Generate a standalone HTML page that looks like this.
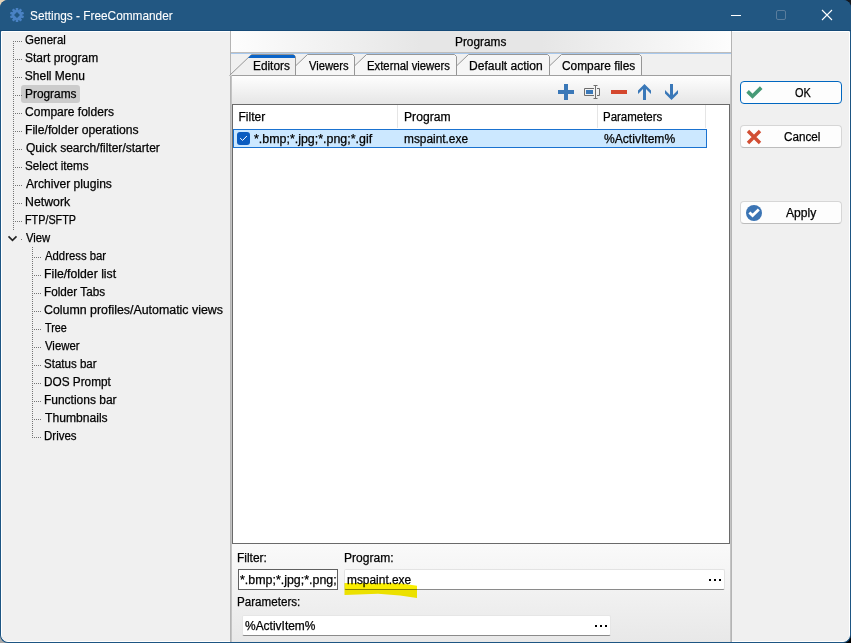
<!DOCTYPE html>
<html><head><meta charset="utf-8">
<style>
*{margin:0;padding:0;box-sizing:border-box}
html,body{width:851px;height:643px;overflow:hidden;background:#161616}
body{position:relative;font-family:"Liberation Sans",sans-serif;font-size:12px;color:#000}
.a{position:absolute}
.t{position:absolute;white-space:nowrap;line-height:14px;height:14px;-webkit-text-stroke:0.25px currentColor}
#win{position:absolute;left:0;top:0;width:851px;height:643px;background:#1d5583;border-radius:8px;overflow:hidden}
</style></head><body>
<div class="a" style="left:0px;top:0px;width:10px;height:10px;background:#e6d4b8"></div>
<div class="a" style="left:841px;top:0px;width:10px;height:10px;background:#14181f"></div>
<div class="a" style="left:0px;top:633px;width:10px;height:10px;background:#a9a9a9"></div>
<div class="a" style="left:841px;top:633px;width:10px;height:10px;background:#000"></div>
<div id="win">
<div class="a" style="left:0px;top:0px;width:851px;height:30px;background:#225782"></div>
<div class="a" style="left:0px;top:30px;width:851px;height:1px;background:#154a77"></div>
<div class="a" style="left:1px;top:31px;width:849px;height:611px;background:#f0f0f0;border-top:1px solid #fff;border-left:1px solid #fff;border-right:1px solid #fff;border-bottom:1px solid #fff;border-radius:0 0 7px 7px"></div>
<svg class="a" style="left:9px;top:7px" width="16" height="16" viewBox="-8 -8 16 16"><g fill="#4a82c4"><rect x="-1.25" y="-7" width="2.5" height="3" transform="rotate(0)"/><rect x="-1.25" y="-7" width="2.5" height="3" transform="rotate(36)"/><rect x="-1.25" y="-7" width="2.5" height="3" transform="rotate(72)"/><rect x="-1.25" y="-7" width="2.5" height="3" transform="rotate(108)"/><rect x="-1.25" y="-7" width="2.5" height="3" transform="rotate(144)"/><rect x="-1.25" y="-7" width="2.5" height="3" transform="rotate(180)"/><rect x="-1.25" y="-7" width="2.5" height="3" transform="rotate(216)"/><rect x="-1.25" y="-7" width="2.5" height="3" transform="rotate(252)"/><rect x="-1.25" y="-7" width="2.5" height="3" transform="rotate(288)"/><rect x="-1.25" y="-7" width="2.5" height="3" transform="rotate(324)"/></g><path fill="#4a82c4" fill-rule="evenodd" d="M-5.3 0A5.3 5.3 0 1 0 5.3 0A5.3 5.3 0 1 0 -5.3 0ZM-3 0L0 -3L3 0L0 3Z"/></svg>
<div class="t" style="left:30.32px;top:10px;transform:scaleX(0.8765);transform-origin:0 0;color:#fff;font-size:13.5px;top:8.8px;-webkit-text-stroke:0.1px #fff">Settings - FreeCommander</div>
<div class="a" style="left:731px;top:15px;width:10px;height:1px;background:#fff"></div>
<div class="a" style="left:776px;top:10px;width:10px;height:10px;border:1px solid #5a7d9d;border-radius:2px"></div>
<svg class="a" style="left:821px;top:9px" width="12" height="12" viewBox="0 0 12 12"><path d="M1 1L11 11M11 1L1 11" stroke="#fff" stroke-width="1.1"/></svg>
<div class="a" style="left:15px;top:41px;width:1px;height:1px;background:#747474"></div>
<div class="a" style="left:17px;top:41px;width:1px;height:1px;background:#747474"></div>
<div class="a" style="left:19px;top:41px;width:1px;height:1px;background:#747474"></div>
<div class="a" style="left:21px;top:41px;width:1px;height:1px;background:#747474"></div>
<div class="t" style="left:24.84px;top:33px;transform:scaleX(0.9561);transform-origin:0 0;">General</div>
<div class="a" style="left:15px;top:59px;width:1px;height:1px;background:#747474"></div>
<div class="a" style="left:17px;top:59px;width:1px;height:1px;background:#747474"></div>
<div class="a" style="left:19px;top:59px;width:1px;height:1px;background:#747474"></div>
<div class="a" style="left:21px;top:59px;width:1px;height:1px;background:#747474"></div>
<div class="t" style="left:24.80px;top:51px;transform:scaleX(0.9986);transform-origin:0 0;">Start program</div>
<div class="a" style="left:15px;top:77px;width:1px;height:1px;background:#747474"></div>
<div class="a" style="left:17px;top:77px;width:1px;height:1px;background:#747474"></div>
<div class="a" style="left:19px;top:77px;width:1px;height:1px;background:#747474"></div>
<div class="a" style="left:21px;top:77px;width:1px;height:1px;background:#747474"></div>
<div class="t" style="left:24.80px;top:69px;">Shell Menu</div>
<div class="a" style="left:21px;top:85px;width:59px;height:18px;background:#cccccc;border-radius:3px"></div>
<div class="a" style="left:15px;top:95px;width:1px;height:1px;background:#747474"></div>
<div class="a" style="left:17px;top:95px;width:1px;height:1px;background:#747474"></div>
<div class="a" style="left:19px;top:95px;width:1px;height:1px;background:#747474"></div>
<div class="a" style="left:21px;top:95px;width:1px;height:1px;background:#747474"></div>
<div class="t" style="left:24.81px;top:87px;transform:scaleX(0.9902);transform-origin:0 0;">Programs</div>
<div class="a" style="left:15px;top:113px;width:1px;height:1px;background:#747474"></div>
<div class="a" style="left:17px;top:113px;width:1px;height:1px;background:#747474"></div>
<div class="a" style="left:19px;top:113px;width:1px;height:1px;background:#747474"></div>
<div class="a" style="left:21px;top:113px;width:1px;height:1px;background:#747474"></div>
<div class="t" style="left:24.80px;top:105px;transform:scaleX(1.0023);transform-origin:0 0;">Compare folders</div>
<div class="a" style="left:15px;top:131px;width:1px;height:1px;background:#747474"></div>
<div class="a" style="left:17px;top:131px;width:1px;height:1px;background:#747474"></div>
<div class="a" style="left:19px;top:131px;width:1px;height:1px;background:#747474"></div>
<div class="a" style="left:21px;top:131px;width:1px;height:1px;background:#747474"></div>
<div class="t" style="left:24.79px;top:123px;transform:scaleX(1.0126);transform-origin:0 0;">File/folder operations</div>
<div class="a" style="left:15px;top:149px;width:1px;height:1px;background:#747474"></div>
<div class="a" style="left:17px;top:149px;width:1px;height:1px;background:#747474"></div>
<div class="a" style="left:19px;top:149px;width:1px;height:1px;background:#747474"></div>
<div class="a" style="left:21px;top:149px;width:1px;height:1px;background:#747474"></div>
<div class="t" style="left:25.80px;top:141px;transform:scaleX(1.0037);transform-origin:0 0;">Quick search/filter/starter</div>
<div class="a" style="left:15px;top:167px;width:1px;height:1px;background:#747474"></div>
<div class="a" style="left:17px;top:167px;width:1px;height:1px;background:#747474"></div>
<div class="a" style="left:19px;top:167px;width:1px;height:1px;background:#747474"></div>
<div class="a" style="left:21px;top:167px;width:1px;height:1px;background:#747474"></div>
<div class="t" style="left:24.83px;top:159px;transform:scaleX(0.9734);transform-origin:0 0;">Select items</div>
<div class="a" style="left:15px;top:185px;width:1px;height:1px;background:#747474"></div>
<div class="a" style="left:17px;top:185px;width:1px;height:1px;background:#747474"></div>
<div class="a" style="left:19px;top:185px;width:1px;height:1px;background:#747474"></div>
<div class="a" style="left:21px;top:185px;width:1px;height:1px;background:#747474"></div>
<div class="t" style="left:25.80px;top:177px;transform:scaleX(1.0059);transform-origin:0 0;">Archiver plugins</div>
<div class="a" style="left:15px;top:203px;width:1px;height:1px;background:#747474"></div>
<div class="a" style="left:17px;top:203px;width:1px;height:1px;background:#747474"></div>
<div class="a" style="left:19px;top:203px;width:1px;height:1px;background:#747474"></div>
<div class="a" style="left:21px;top:203px;width:1px;height:1px;background:#747474"></div>
<div class="t" style="left:24.77px;top:195px;transform:scaleX(1.0256);transform-origin:0 0;">Network</div>
<div class="a" style="left:15px;top:221px;width:1px;height:1px;background:#747474"></div>
<div class="a" style="left:17px;top:221px;width:1px;height:1px;background:#747474"></div>
<div class="a" style="left:19px;top:221px;width:1px;height:1px;background:#747474"></div>
<div class="a" style="left:21px;top:221px;width:1px;height:1px;background:#747474"></div>
<div class="t" style="left:24.90px;top:213px;transform:scaleX(0.9000);transform-origin:0 0;">FTP/SFTP</div>
<div class="a" style="left:21px;top:239px;width:1px;height:1px;background:#747474"></div>
<div class="t" style="left:25.80px;top:231px;transform:scaleX(0.9385);transform-origin:0 0;">View</div>
<div class="a" style="left:13px;top:41px;width:1px;height:189px;background:repeating-linear-gradient(180deg,#747474 0 1px,transparent 1px 2px)"></div>
<svg class="a" style="left:7px;top:234px" width="12" height="8" viewBox="0 0 12 8"><path d="M1.5 2.4L5.5 6.3L9.5 2.4" fill="none" stroke="#222" stroke-width="1.6"/></svg>
<div class="a" style="left:34px;top:257px;width:1px;height:1px;background:#747474"></div>
<div class="a" style="left:36px;top:257px;width:1px;height:1px;background:#747474"></div>
<div class="a" style="left:38px;top:257px;width:1px;height:1px;background:#747474"></div>
<div class="a" style="left:40px;top:257px;width:1px;height:1px;background:#747474"></div>
<div class="t" style="left:44.90px;top:249px;transform:scaleX(0.9446);transform-origin:0 0;">Address bar</div>
<div class="a" style="left:34px;top:275px;width:1px;height:1px;background:#747474"></div>
<div class="a" style="left:36px;top:275px;width:1px;height:1px;background:#747474"></div>
<div class="a" style="left:38px;top:275px;width:1px;height:1px;background:#747474"></div>
<div class="a" style="left:40px;top:275px;width:1px;height:1px;background:#747474"></div>
<div class="t" style="left:43.88px;top:267px;transform:scaleX(1.0200);transform-origin:0 0;">File/folder list</div>
<div class="a" style="left:34px;top:293px;width:1px;height:1px;background:#747474"></div>
<div class="a" style="left:36px;top:293px;width:1px;height:1px;background:#747474"></div>
<div class="a" style="left:38px;top:293px;width:1px;height:1px;background:#747474"></div>
<div class="a" style="left:40px;top:293px;width:1px;height:1px;background:#747474"></div>
<div class="t" style="left:43.92px;top:285px;transform:scaleX(0.9770);transform-origin:0 0;">Folder Tabs</div>
<div class="a" style="left:34px;top:311px;width:1px;height:1px;background:#747474"></div>
<div class="a" style="left:36px;top:311px;width:1px;height:1px;background:#747474"></div>
<div class="a" style="left:38px;top:311px;width:1px;height:1px;background:#747474"></div>
<div class="a" style="left:40px;top:311px;width:1px;height:1px;background:#747474"></div>
<div class="t" style="left:43.87px;top:303px;transform:scaleX(1.0320);transform-origin:0 0;">Column profiles/Automatic views</div>
<div class="a" style="left:34px;top:329px;width:1px;height:1px;background:#747474"></div>
<div class="a" style="left:36px;top:329px;width:1px;height:1px;background:#747474"></div>
<div class="a" style="left:38px;top:329px;width:1px;height:1px;background:#747474"></div>
<div class="a" style="left:40px;top:329px;width:1px;height:1px;background:#747474"></div>
<div class="t" style="left:44.90px;top:321px;transform:scaleX(0.9000);transform-origin:0 0;">Tree</div>
<div class="a" style="left:34px;top:347px;width:1px;height:1px;background:#747474"></div>
<div class="a" style="left:36px;top:347px;width:1px;height:1px;background:#747474"></div>
<div class="a" style="left:38px;top:347px;width:1px;height:1px;background:#747474"></div>
<div class="a" style="left:40px;top:347px;width:1px;height:1px;background:#747474"></div>
<div class="t" style="left:44.90px;top:339px;transform:scaleX(0.9459);transform-origin:0 0;">Viewer</div>
<div class="a" style="left:34px;top:365px;width:1px;height:1px;background:#747474"></div>
<div class="a" style="left:36px;top:365px;width:1px;height:1px;background:#747474"></div>
<div class="a" style="left:38px;top:365px;width:1px;height:1px;background:#747474"></div>
<div class="a" style="left:40px;top:365px;width:1px;height:1px;background:#747474"></div>
<div class="t" style="left:43.94px;top:357px;transform:scaleX(0.9611);transform-origin:0 0;">Status bar</div>
<div class="a" style="left:34px;top:383px;width:1px;height:1px;background:#747474"></div>
<div class="a" style="left:36px;top:383px;width:1px;height:1px;background:#747474"></div>
<div class="a" style="left:38px;top:383px;width:1px;height:1px;background:#747474"></div>
<div class="a" style="left:40px;top:383px;width:1px;height:1px;background:#747474"></div>
<div class="t" style="left:43.92px;top:375px;transform:scaleX(0.9821);transform-origin:0 0;">DOS Prompt</div>
<div class="a" style="left:34px;top:401px;width:1px;height:1px;background:#747474"></div>
<div class="a" style="left:36px;top:401px;width:1px;height:1px;background:#747474"></div>
<div class="a" style="left:38px;top:401px;width:1px;height:1px;background:#747474"></div>
<div class="a" style="left:40px;top:401px;width:1px;height:1px;background:#747474"></div>
<div class="t" style="left:43.90px;top:393px;">Functions bar</div>
<div class="a" style="left:34px;top:419px;width:1px;height:1px;background:#747474"></div>
<div class="a" style="left:36px;top:419px;width:1px;height:1px;background:#747474"></div>
<div class="a" style="left:38px;top:419px;width:1px;height:1px;background:#747474"></div>
<div class="a" style="left:40px;top:419px;width:1px;height:1px;background:#747474"></div>
<div class="t" style="left:44.90px;top:411px;transform:scaleX(1.0097);transform-origin:0 0;">Thumbnails</div>
<div class="a" style="left:34px;top:437px;width:1px;height:1px;background:#747474"></div>
<div class="a" style="left:36px;top:437px;width:1px;height:1px;background:#747474"></div>
<div class="a" style="left:38px;top:437px;width:1px;height:1px;background:#747474"></div>
<div class="a" style="left:40px;top:437px;width:1px;height:1px;background:#747474"></div>
<div class="t" style="left:43.94px;top:429px;transform:scaleX(0.9576);transform-origin:0 0;">Drives</div>
<div class="a" style="left:32px;top:247px;width:1px;height:191px;background:repeating-linear-gradient(180deg,#747474 0 1px,transparent 1px 2px)"></div>
<div class="a" style="left:230px;top:31px;width:1px;height:611px;background:#b4b4b4"></div>
<div class="a" style="left:731px;top:31px;width:1px;height:611px;background:#b4b4b4"></div>
<div class="a" style="left:231px;top:31px;width:500px;height:21px;background:linear-gradient(90deg,#fdfdfd 0%,#e6e6e6 38%,#e6e6e6 62%,#fdfdfd 100%)"></div>
<div class="a" style="left:231px;top:52px;width:500px;height:1px;background:#bfbdbb"></div>
<div class="a" style="left:231px;top:53px;width:500px;height:1px;background:#a8c8ec"></div>
<div class="t" style="left:454.51px;top:35px;transform:scaleX(0.9863);transform-origin:0 0;">Programs</div>
<div class="a" style="left:231px;top:54px;width:500px;height:21px;background:#f0f0f0"></div>
<svg class="a" style="left:0;top:0" width="851" height="80"><path d="M539.5 75.5 L561.5 54.5 L639.5 54.5 L641.5 56.5 L641.5 75.5" fill="#f6f6f6" stroke="#969696" stroke-width="1"/><path d="M446.5 75.5 L468.5 54.5 L547.5 54.5 L549.5 56.5 L549.5 75.5" fill="#f6f6f6" stroke="#969696" stroke-width="1"/><path d="M344.5 75.5 L366.5 54.5 L454.5 54.5 L456.5 56.5 L456.5 75.5" fill="#f6f6f6" stroke="#969696" stroke-width="1"/><path d="M285.5 75.5 L307.5 54.5 L352.5 54.5 L354.5 56.5 L354.5 75.5" fill="#f6f6f6" stroke="#969696" stroke-width="1"/><path d="M229.5 75.5 L251.5 54.5 L293.5 54.5 L295.5 56.5 L295.5 75.5" fill="#f0f0f0" stroke="#969696" stroke-width="1"/><path d="M251 55 L294 55 L295 56 L295 58 L248 58 Z" fill="#0a64c8"/></svg>
<div class="t" style="left:252.51px;top:59px;transform:scaleX(0.9861);transform-origin:0 0;">Editors</div>
<div class="t" style="left:308.50px;top:59px;transform:scaleX(0.9333);transform-origin:0 0;">Viewers</div>
<div class="t" style="left:366.66px;top:59px;transform:scaleX(0.9425);transform-origin:0 0;">External viewers</div>
<div class="t" style="left:469.00px;top:59px;transform:scaleX(1.0042);transform-origin:0 0;">Default action</div>
<div class="t" style="left:561.61px;top:59px;transform:scaleX(0.9904);transform-origin:0 0;">Compare files</div>
<div class="a" style="left:231px;top:75px;width:500px;height:1px;background:#a0a0a0"></div>
<div class="a" style="left:232px;top:76px;width:498px;height:28px;background:linear-gradient(180deg,#fefefe,#e6e6e6)"></div>
<div class="a" style="left:730px;top:75px;width:1px;height:567px;background:#c4c4c4"></div>
<div class="a" style="left:231px;top:75px;width:1px;height:567px;background:#c4c4c4"></div>
<div class="a" style="left:558px;top:90px;width:16px;height:4px;background:#3a78b8"></div>
<div class="a" style="left:564px;top:84px;width:4px;height:16px;background:#3a78b8"></div>
<svg class="a" style="left:583px;top:84px" width="18" height="16" viewBox="0 0 18 16">
<path d="M1.5 4.5H11M1.5 4.5V11.5H11" fill="none" stroke="#6e6e6e" stroke-width="1"/>
<rect x="3" y="6" width="7" height="4" fill="#3a78b8"/>
<path d="M12.5 1.5V14.5M10.5 1.5H14.5M10.5 14.5H14.5M14 4.5H16.5V11.5H14" fill="none" stroke="#6e6e6e" stroke-width="1"/>
</svg>
<div class="a" style="left:611px;top:90px;width:16px;height:4px;background:#d4472e"></div>
<svg class="a" style="left:0;top:0" width="700" height="110">
<path d="M644.5 84 L651 90.5 L651 94 L646 89 L646 100 L643 100 L643 89 L638 94 L638 90.5 Z" fill="#3a78b8"/>
<path d="M670 84 L673 84 L673 95 L678 90 L678 93.5 L671.5 100 L665 93.5 L665 90 L670 95 Z" fill="#3a78b8"/>
</svg>
<div class="a" style="left:232px;top:104px;width:498px;height:440px;background:#fff;border:1px solid #6a6a6a"></div>
<div class="a" style="left:397px;top:105px;width:1px;height:23px;background:#e5e5e5"></div>
<div class="a" style="left:597px;top:105px;width:1px;height:23px;background:#e5e5e5"></div>
<div class="a" style="left:705px;top:105px;width:1px;height:23px;background:#e5e5e5"></div>
<div class="t" style="left:238.50px;top:110px;">Filter</div>
<div class="t" style="left:403.59px;top:110px;transform:scaleX(1.0114);transform-origin:0 0;">Program</div>
<div class="t" style="left:603.44px;top:110px;transform:scaleX(0.9557);transform-origin:0 0;">Parameters</div>
<div class="a" style="left:233px;top:129px;width:474px;height:19px;background:#cce8ff;border:1px solid #1a72d0"></div>
<div class="a" style="left:237px;top:132px;width:13px;height:13px;background:#0b5cc0;border-radius:3px"></div>
<svg class="a" style="left:237px;top:132px" width="13" height="13" viewBox="0 0 13 13"><path d="M3.2 6.2L5.6 8.4L9.9 4" fill="none" stroke="#fff" stroke-width="1"/></svg>
<div class="t" style="left:254.06px;top:132px;transform:scaleX(1.0354);transform-origin:0 0;">*.bmp;*.jpg;*.png;*.gif</div>
<div class="t" style="left:403.61px;top:132px;transform:scaleX(0.9889);transform-origin:0 0;">mspaint.exe</div>
<div class="t" style="left:604.40px;top:132px;transform:scaleX(1.0071);transform-origin:0 0;">%ActivItem%</div>
<div class="a" style="left:232px;top:544px;width:498px;height:98px;background:linear-gradient(180deg,#fafafa,#e8e8e8)"></div>
<div class="t" style="left:237.40px;top:551px;transform:scaleX(0.9964);transform-origin:0 0;">Filter:</div>
<div class="t" style="left:343.80px;top:551px;transform:scaleX(1.0043);transform-origin:0 0;">Program:</div>
<div class="t" style="left:237.43px;top:595px;transform:scaleX(0.9683);transform-origin:0 0;">Parameters:</div>
<div class="a" style="left:238px;top:569px;width:100px;height:21px;background:#fff;border:1px solid #606060"></div>
<div class="a" style="left:239px;top:570px;width:98px;height:19px;overflow:hidden">
<div class="t" style="left:0.56px;top:3px;transform:scaleX(1.0354);transform-origin:0 0;">*.bmp;*.jpg;*.png;*.gif</div>
</div>
<div class="a" style="left:344px;top:569px;width:381px;height:21px;background:#fff;border:1px solid #e3e3e3;border-bottom:1px solid #8a8a8a;border-radius:2px"></div>
<div class="a" style="left:709px;top:579px;width:2px;height:2px;background:#000"></div>
<div class="a" style="left:714px;top:579px;width:2px;height:2px;background:#000"></div>
<div class="a" style="left:719px;top:579px;width:2px;height:2px;background:#000"></div>
<div class="t" style="left:346.61px;top:573px;transform:scaleX(0.9921);transform-origin:0 0;">mspaint.exe</div>
<svg class="a" style="left:0;top:0;mix-blend-mode:multiply" width="430" height="600"><path d="M344.5 583 L400 583.3 L417 585.8 L417 598 L400 595.5 L378 593.7 L344.5 595 Z" fill="#faee00"/></svg>
<div class="a" style="left:242px;top:615px;width:369px;height:21px;background:#fff;border:1px solid #e6e6e6;border-bottom:1px solid #8a8a8a;border-radius:2px"></div>
<div class="a" style="left:595px;top:625px;width:2px;height:2px;background:#000"></div>
<div class="a" style="left:600px;top:625px;width:2px;height:2px;background:#000"></div>
<div class="a" style="left:605px;top:625px;width:2px;height:2px;background:#000"></div>
<div class="t" style="left:244.80px;top:619px;transform:scaleX(0.9971);transform-origin:0 0;">%ActivItem%</div>
<div class="a" style="left:740px;top:81px;width:102px;height:23px;background:#fdfdfd;border:1px solid #0067c0;border-radius:4px"></div>
<svg class="a" style="left:745px;top:86px" width="18" height="14" viewBox="0 0 18 14"><path d="M2.6 5.4L7.5 10.2L16.2 1.6" fill="none" stroke="#469a76" stroke-width="3.7"/></svg>
<div class="t" style="left:794.60px;top:86px;transform:scaleX(0.9118);transform-origin:0 0;">OK</div>
<div class="a" style="left:740px;top:125px;width:102px;height:23px;background:#fdfdfd;border:1px solid #d6d6d6;border-bottom-color:#bcbcbc;border-radius:4px"></div>
<svg class="a" style="left:746px;top:129px" width="16" height="16" viewBox="0 0 16 16"><path d="M2 2L14 14M14 2L2 14" fill="none" stroke="#d24e33" stroke-width="3.4"/></svg>
<div class="t" style="left:783.73px;top:130px;transform:scaleX(0.9722);transform-origin:0 0;">Cancel</div>
<div class="a" style="left:740px;top:201px;width:102px;height:23px;background:#fdfdfd;border:1px solid #d6d6d6;border-bottom-color:#bcbcbc;border-radius:4px"></div>
<svg class="a" style="left:746px;top:205px" width="16" height="16" viewBox="0 0 16 16"><circle cx="8" cy="8" r="8" fill="#3b74b4"/><path d="M3.4 7.4L6.6 10.6L12.8 4.6" fill="none" stroke="#fff" stroke-width="2.8"/></svg>
<div class="t" style="left:786.40px;top:206px;transform:scaleX(1.0100);transform-origin:0 0;">Apply</div>
</div>
</body></html>
